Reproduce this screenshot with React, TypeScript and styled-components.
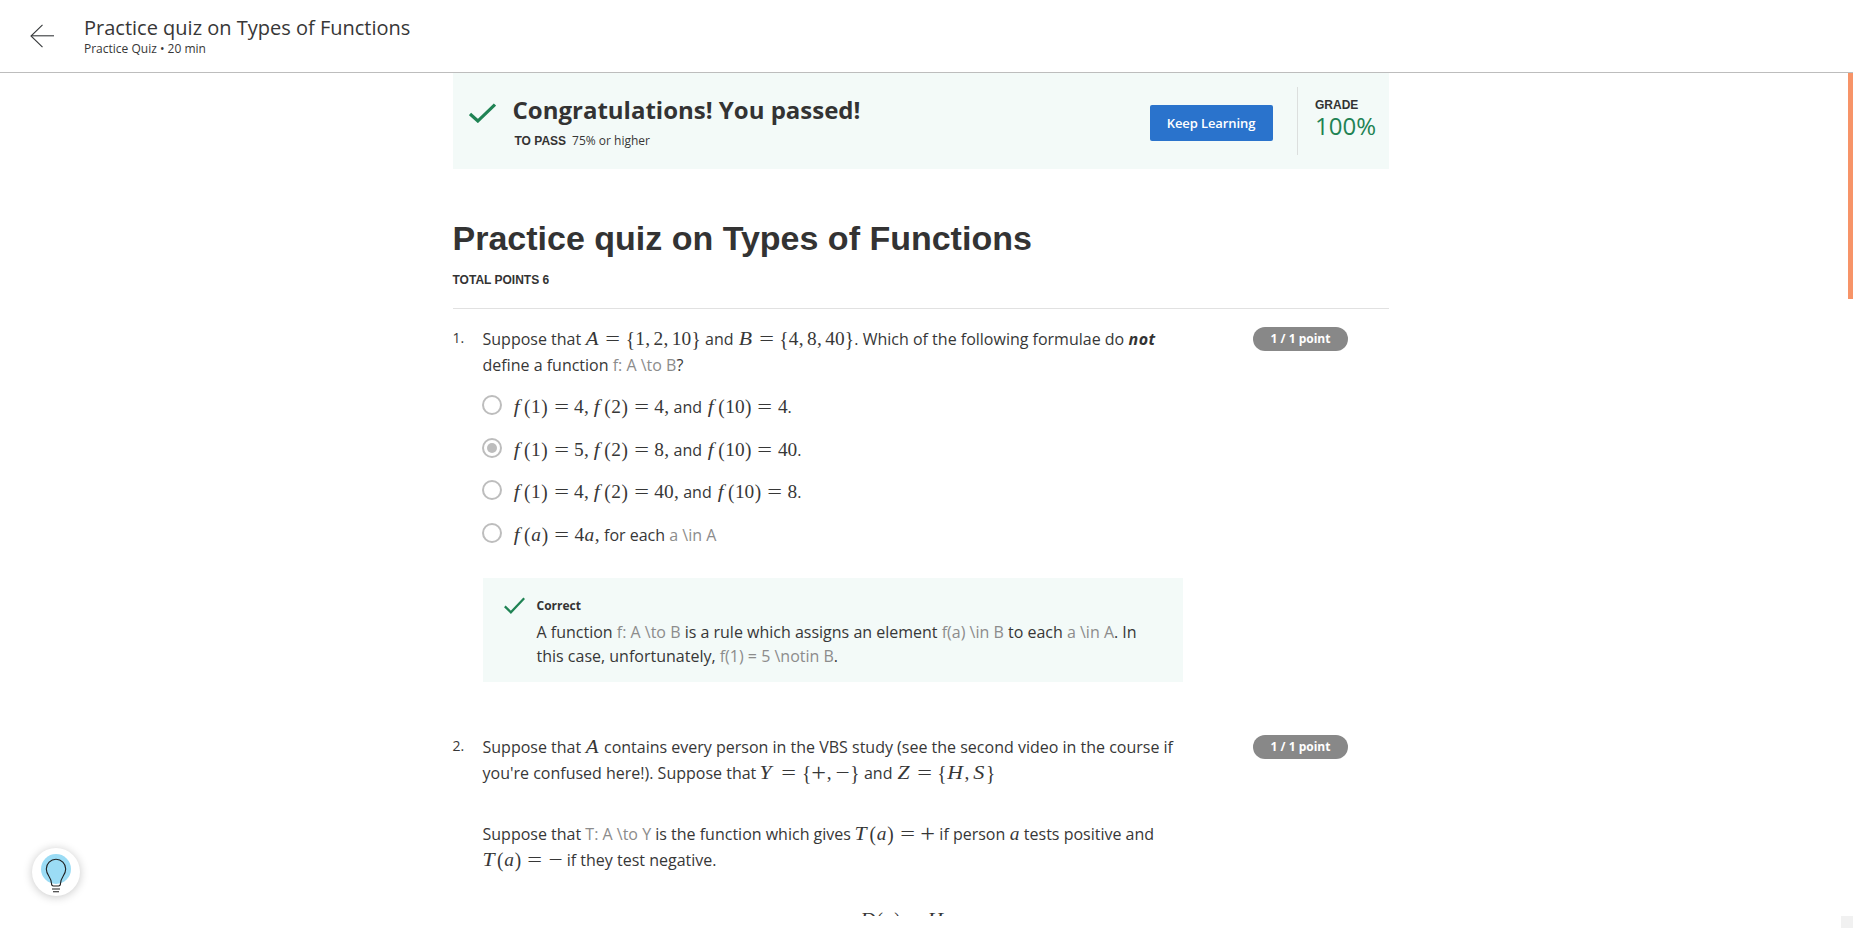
import React from 'react';
import styled, { createGlobalStyle } from 'styled-components';

const GlobalStyle = createGlobalStyle`
  * { box-sizing: border-box; }
  body { margin: 0; background: #fff; color: #373737; font-family: 'Open Sans', sans-serif; overflow: hidden; }
  h1, h2, p { margin: 0; }
`;

const Page = styled.div`
  position: relative;
  display: flex;
  flex-direction: column;
  height: 928px;
  width: 100%;
`;
const Header = styled.header`
  display: flex;
  flex: none;
  height: 73px;
  border-bottom: 1px solid #bdbdbd;
  padding: 16px 0 0 30px;
`;
const BackButton = styled.span`
  display: block;
  width: 54px;
  padding-top: 8px;
  svg { display: block; }
`;
const HeaderTitle = styled.div`
  font-size: 20px;
  line-height: 24px;
`;
const HeaderMeta = styled.div`
  font-size: 12px;
  line-height: 18px;
`;
const Body = styled.div`
  display: flex;
  height: 843px;
  overflow: hidden;
`;
const Content = styled.main`
  width: 936px;
  flex: none;
  margin-left: 452.5px;
`;
const ScrollThumb = styled.div`
  width: 5px;
  height: 226px;
  margin-left: auto;
  background: #f79468;
`;
const ScrollCorner = styled.div`
  width: 12px;
  height: 12px;
  align-self: flex-end;
  background: #f1f1f1;
`;

const Banner = styled.section`
  display: flex;
  height: 96px;
  background: #f3faf8;
`;
const BannerCheck = styled.div`
  width: 60px;
  padding: 29.5px 0 0 16.5px;
  svg { display: block; }
`;
const BannerText = styled.div`
  flex: 1;
  padding-top: 19px;
`;
const BannerHeading = styled.h2`
  font-size: 24px;
  line-height: 36px;
  font-weight: 700;
  color: #333;
`;
const PassRow = styled.div`
  display: flex;
  gap: 6px;
  margin: 4px 0 0 2px;
  font-size: 12px;
  line-height: 18px;
`;
const Caps = styled.span`
  font: 700 12px/18px 'Liberation Sans', Arial, sans-serif;
  color: #333;
`;
const KeepButton = styled.button`
  width: 123px;
  height: 36px;
  margin: 32px 24px 0 0;
  padding: 0;
  border: 0;
  border-radius: 2px;
  background: #2a73cc;
  color: #fff;
  font: 600 13px/36px 'Open Sans', sans-serif;
  letter-spacing: -0.1px;
`;
const Grade = styled.div`
  width: 92px;
  height: 68px;
  margin-top: 14px;
  padding: 11px 0 0 17.5px;
  border-left: 1px solid #dcdfde;
`;
const GradeLabel = styled(Caps)`
  display: block;
  line-height: 14px;
`;
const GradeValue = styled.div`
  font-size: 24px;
  line-height: 28px;
  color: #1f8354;
`;

const Title = styled.h1`
  margin-top: 49px;
  font: 700 34px/40px 'Liberation Sans', Arial, sans-serif;
  color: #333;
`;
const TotalPoints = styled(Caps)`
  display: block;
  margin-top: 13px;
`;
const Rule = styled.div`
  height: 1px;
  margin: 19px 0 17px;
  background: #e1e1e1;
`;

const Question = styled.section<{ $height?: number }>`
  display: flex;
  height: ${(p) => (p.$height ? `${p.$height}px` : 'auto')};
`;
const QuestionNumber = styled.div`
  width: 30px;
  flex: none;
  font-size: 14px;
  line-height: 24px;
`;
const QuestionBody = styled.div`
  width: 700px;
  flex: none;
  font-size: 16px;
  line-height: 26px;
`;
const Points = styled.div`
  width: 95px;
  height: 24px;
  margin: 1px 0 0 70.5px;
  border-radius: 12px;
  background: #888;
  color: #fff;
  font-size: 12px;
  font-weight: 700;
  line-height: 23px;
  text-align: center;
`;
const Prompt = styled.p<{ $gap?: number }>`
  white-space: nowrap;
  margin-top: ${(p) => p.$gap ?? 0}px;
`;
const Emphasis = styled.em`
  font-weight: 700;
  letter-spacing: 0.6px;
  color: #333;
`;
const Formula = styled.div`
  margin: 34px 0 0 377px;
`;
const Raw = styled.span`
  color: #8c8c8c;
`;
const Options = styled.div`
  display: grid;
  grid-auto-rows: 42.67px;
  margin: 16px 0 0 -0.7px;
`;
const Option = styled.div`
  display: flex;
  gap: 10.2px;
  white-space: nowrap;
`;
const Radio = styled.span<{ $checked?: boolean }>`
  display: grid;
  place-items: center;
  width: 20px;
  height: 20px;
  margin-top: 1px;
  border: 2px solid #bdbdbd;
  border-radius: 50%;
  &::after {
    content: '';
    width: 10px;
    height: 10px;
    border-radius: 50%;
    background: ${(p) => (p.$checked ? '#bdbdbd' : 'transparent')};
  }
`;
const Feedback = styled.div`
  display: flex;
  height: 104px;
  margin-top: 13px;
  padding: 19px 0 0 21px;
  background: #f3faf8;
  line-height: 24px;
  white-space: nowrap;
  svg { display: block; margin: 0 12px 0 0; }
`;
const FeedbackTitle = styled.div`
  margin-bottom: 5px;
  font-size: 12px;
  font-weight: 700;
  line-height: 18px;
  color: #333;
`;
const HintButton = styled.div`
  position: absolute;
  left: 32px;
  top: 848px;
  width: 48px;
  height: 48px;
  border-radius: 50%;
  background: #fff;
  box-shadow: 0 1px 10px rgba(0, 0, 0, 0.22);
`;

const MathRun = styled.span`
  font: 19.36px/0 'Liberation Serif', 'Times New Roman', serif;
  white-space: nowrap;
`;
const Glyph = styled.span<{
  $w: number;
  $italic?: boolean;
  $sx?: number;
  $sy?: number;
  $before?: number;
  $after?: number;
}>`
  display: inline-flex;
  justify-content: center;
  width: ${(p) => p.$w}em;
  margin-left: ${(p) => p.$before ?? 0}em;
  margin-right: ${(p) => p.$after ?? 0}em;
  font-style: ${(p) => (p.$italic ? 'italic' : 'normal')};
  transform: scale(${(p) => p.$sx ?? 1}, ${(p) => p.$sy ?? 1});
`;

type Metric = { w: number; italic?: boolean; sx?: number; sy?: number; before?: number; after?: number };
const metrics: Record<string, Metric> = {
  A: { w: 0.75, italic: true, sx: 1.08 },
  B: { w: 0.759, italic: true, sx: 1.12, after: 0.05 },
  D: { w: 0.828, italic: true, sx: 1.1, after: 0.028 },
  H: { w: 0.831, italic: true, sx: 1.12, after: 0.081 },
  S: { w: 0.613, italic: true, sx: 1.15, after: 0.058 },
  T: { w: 0.584, italic: true, sx: 1.12, after: 0.139 },
  Y: { w: 0.581, italic: true, sx: 1.12, after: 0.222 },
  Z: { w: 0.683, italic: true, sx: 1.12, after: 0.071 },
  a: { w: 0.529, italic: true },
  f: { w: 0.489, italic: true, sx: 1.1, after: 0.108 },
  '(': { w: 0.389, sy: 1.13 },
  ')': { w: 0.389, sy: 1.13 },
  '{': { w: 0.5, sy: 1.13 },
  '}': { w: 0.5, sy: 1.13 },
  ',': { w: 0.278, after: 0.167 },
  '.': { w: 0.278 },
  '=': { w: 0.778, sx: 1.35, before: 0.278, after: 0.278 },
  '+': { w: 0.778, sx: 1.35, sy: 1.3 },
  '−': { w: 0.778, sx: 1.3 },
};

const M = ({ t, tight }: { t: string; tight?: boolean }) => (
  <MathRun>
    {[...t].map((c, i) => {
      const m: Metric = metrics[c] ?? { w: 0.5 };
      const last = tight && i === t.length - 1;
      return (
        <Glyph
          key={i}
          $w={m.w}
          $italic={m.italic}
          $sx={m.sx}
          $sy={m.sy}
          $before={m.before}
          $after={last ? 0 : m.after}
        >
          {c}
        </Glyph>
      );
    })}
  </MathRun>
);

const Check = ({ w, h, stroke }: { w: number; h: number; stroke: number }) => (
  <svg width={w} height={h} viewBox="0 0 26 20" preserveAspectRatio="none" fill="none">
    <path d="M1 11 L8.5 18 L25 1.5" stroke="#1f8354" strokeWidth={stroke} />
  </svg>
);

export default function App() {
  return (
    <>
      <GlobalStyle />
      <Page>
        <Header>
          <BackButton>
            <svg width="24" height="24" viewBox="0 0 24 24" fill="none" stroke="#373a3c">
              <path d="M12.5 .8 L1 12 L12.5 23.2" strokeWidth="1.1" />
              <path d="M1 11.8 H24" strokeWidth="1.1" />
            </svg>
          </BackButton>
          <div>
            <HeaderTitle>Practice quiz on Types of Functions</HeaderTitle>
            <HeaderMeta>Practice Quiz • 20 min</HeaderMeta>
          </div>
        </Header>
        <Body>
          <Content>
            <Banner>
              <BannerCheck><Check w={27} h={20} stroke={3.1} /></BannerCheck>
              <BannerText>
                <BannerHeading>Congratulations! You passed!</BannerHeading>
                <PassRow><Caps>TO PASS</Caps><span>75% or higher</span></PassRow>
              </BannerText>
              <KeepButton>Keep Learning</KeepButton>
              <Grade>
                <GradeLabel>GRADE</GradeLabel>
                <GradeValue>100%</GradeValue>
              </Grade>
            </Banner>
            <Title>Practice quiz on Types of Functions</Title>
            <TotalPoints>TOTAL POINTS 6</TotalPoints>
            <Rule />
            <Question $height={408}>
              <QuestionNumber>1.</QuestionNumber>
              <QuestionBody>
                <Prompt>
                  Suppose that <M t="A={1,2,10}" /> and <M t="B={4,8,40}" />. Which of the following formulae do <Emphasis>not</Emphasis>
                  <br />
                  define a function <Raw>f: A \to B</Raw>?
                </Prompt>
                <Options>
                  <Option><Radio /><span><M t="f(1)=4,f(2)=4," tight /> and <M t="f(10)=4" />.</span></Option>
                  <Option><Radio $checked /><span><M t="f(1)=5,f(2)=8," tight /> and <M t="f(10)=40" />.</span></Option>
                  <Option><Radio /><span><M t="f(1)=4,f(2)=40," tight /> and <M t="f(10)=8" />.</span></Option>
                  <Option><Radio /><span><M t="f(a)=4a," tight /> for each <Raw>a \in A</Raw></span></Option>
                </Options>
                <Feedback>
                  <Check w={21} h={17} stroke={2.8} />
                  <div>
                    <FeedbackTitle>Correct</FeedbackTitle>
                    <div>A function <Raw>f: A \to B</Raw> is a rule which assigns an element <Raw>f(a) \in B</Raw> to each <Raw>a \in A</Raw>. In</div>
                    <div>this case, unfortunately, <Raw>f(1) = 5 \notin B</Raw>.</div>
                  </div>
                </Feedback>
              </QuestionBody>
              <Points>1 / 1 point</Points>
            </Question>
            <Question>
              <QuestionNumber>2.</QuestionNumber>
              <QuestionBody>
                <Prompt>
                  Suppose that <M t="A" /> contains every person in the VBS study (see the second video in the course if
                  <br />
                  you're confused here!). Suppose that <M t="Y={+,−}" /> and <M t="Z={H,S}" />
                </Prompt>
                <Prompt $gap={35}>
                  Suppose that <Raw>T: A \to Y</Raw> is the function which gives <M t="T(a)=+" /> if person <M t="a" /> tests positive and
                  <br />
                  <M t="T(a)=−" /> if they test negative.
                </Prompt>
                <Formula><M t="D(a)=H" /></Formula>
              </QuestionBody>
              <Points>1 / 1 point</Points>
            </Question>
          </Content>
          <ScrollThumb />
        </Body>
        <ScrollCorner />
        <HintButton>
          <svg width="48" height="48" viewBox="0 0 48 48" fill="none">
            <circle cx="24" cy="21" r="15" fill="#9bdcf5" />
            <path d="M19.5 35.5 C19.5 29 14.3 27.5 14.3 21 A9.7 9.7 0 0 1 33.7 21 C33.7 27.5 28.5 29 28.5 35.5 Q28.5 38 26.5 38 H21.5 Q19.5 38 19.5 35.5 Z" stroke="#1f1f1f" strokeWidth="1.1" />
            <path d="M20 41 H28 M21 43.7 H27" stroke="#1f1f1f" strokeWidth="1.1" />
          </svg>
        </HintButton>
      </Page>
    </>
  );
}
